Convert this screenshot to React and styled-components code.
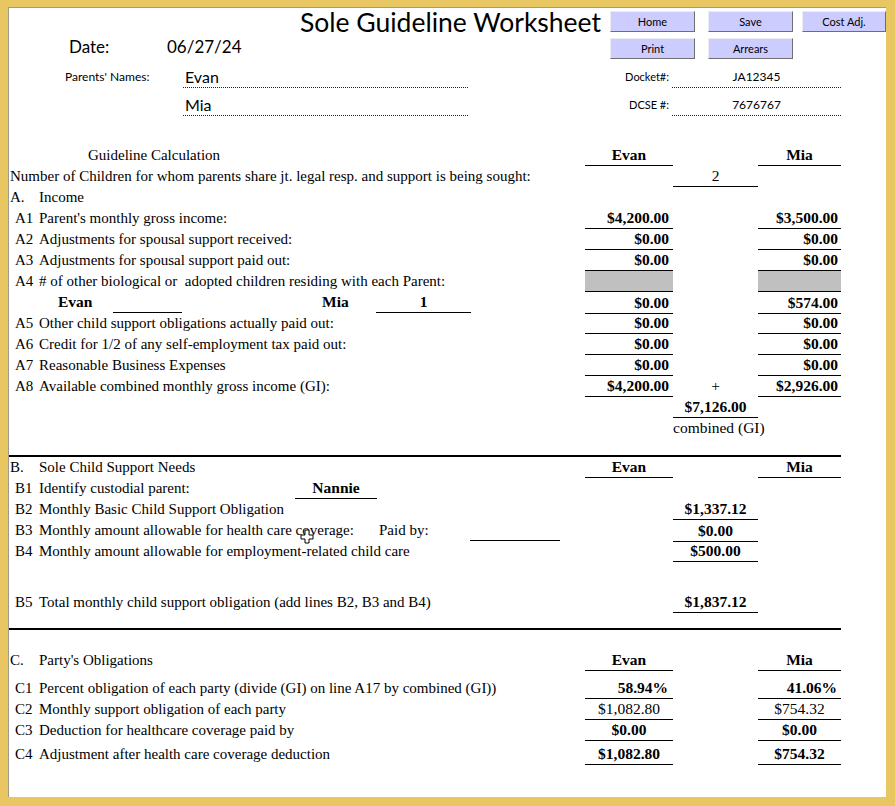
import React from 'react';
import styled, { createGlobalStyle } from 'styled-components';

const GlobalStyle = createGlobalStyle`
  html, body { margin: 0; padding: 0; }
  body {
    background: #e8c662;
    width: 895px;
    height: 806px;
    overflow: hidden;
  }
`;

const Sheet = styled.div`
  position: relative;
  box-sizing: border-box;
  margin: 7px 0 0 8px;
  width: 878px;
  height: 790px;
  background: #fff;
  border-top: 1px solid #a09a88;
  border-left: 1px solid #a09a88;
  color: #000;
`;

const TopBlock = styled.div`
  display: flex;
  height: 52px;
`;

const LeftBlock = styled.div`
  width: 601px;
`;

const Title = styled.div`
  padding-left: 291px;
  height: 29px;
  font: 26.5px/29px Lato, "Liberation Sans", sans-serif;
  white-space: nowrap;
`;

const DateRow = styled.div`
  display: flex;
  padding-left: 60px;
  font: 17px/20px Lato, "Liberation Sans", sans-serif;
`;

const DateLabel = styled.span`
  width: 98px;
`;

const ButtonGrid = styled.div`
  display: grid;
  grid-template-columns: 98px 94px 84px;
  grid-auto-rows: 21px;
  row-gap: 6px;
  padding-top: 3px;
`;

const Button = styled.button`
  box-sizing: border-box;
  width: ${p => p.w || 85}px;
  height: 21px;
  padding: 0;
  background: #ccccff;
  border: 1px solid;
  border-color: #ececf4 #6e6e6e #6e6e6e #ececf4;
  font: 11px/19px Lato, "Liberation Sans", sans-serif;
  color: #000;
  text-align: center;
  cursor: pointer;
`;

const NameGrid = styled.div`
  display: grid;
  grid-template-columns: 56px 118px 285px 201px 3px 169px;
  grid-auto-rows: 28px;
  align-items: end;
`;

const NameLabel = styled.div`
  font: ${p => (p.big ? '12px' : '11px')}/20px Lato, "Liberation Sans", sans-serif;
  text-align: ${p => (p.right ? 'right' : 'left')};
  border-bottom: 1px solid transparent;
`;

const Field = styled.div`
  border-bottom: 1px dotted #222;
  font: ${p => (p.small ? '12px' : '16px')}/20px Lato, "Liberation Sans", sans-serif;
  text-align: ${p => (p.center ? 'center' : 'left')};
  padding-left: ${p => (p.center ? 0 : 2)}px;
`;

const Table = styled.div`
  margin-top: 29px;
  font-family: "Liberation Serif", "Times New Roman", serif;
`;

const Row = styled.div`
  display: grid;
  grid-template-columns: 576px 88px 85px 83px;
  height: ${p => p.h || 21}px;
  align-items: end;
`;

const Label = styled.div`
  position: relative;
  display: flex;
  padding-left: ${p => p.pad ?? 1}px;
  font-size: 15px;
  line-height: 20px;
  white-space: pre;
  border-bottom: 1px solid transparent;
`;

const Code = styled.span`
  display: inline-block;
  width: ${p => p.w || 24}px;
`;

const Cell = styled.div`
  box-sizing: border-box;
  height: 21px;
  font-size: 15.5px;
  line-height: 20px;
  font-weight: ${p => (p.normal ? 'normal' : 'bold')};
  text-align: ${p => p.align || 'center'};
  padding-right: ${p => p.pr || 0}px;
  border-bottom: 1px solid ${p => (p.line ? '#000' : 'transparent')};
  background: ${p => (p.gray ? '#c0c0c0' : 'transparent')};
  white-space: nowrap;
`;

const Inline = styled.div`
  display: grid;
  grid-template-columns: ${p => p.cols};
  align-items: end;
`;

const Blank = styled.div`
  height: 20px;
  line-height: 20px;
  text-align: ${p => p.align || 'center'};
  padding-left: ${p => p.pl || 0}px;
  font-weight: ${p => (p.bold ? 'bold' : 'normal')};
  font-size: ${p => (p.bold ? 15.5 : 15)}px;
  border-bottom: 1px solid ${p => (p.line ? '#000' : 'transparent')};
  white-space: pre;
`;

const Rule = styled.div`
  width: 832px;
  height: 2px;
  background: #000;
  margin-top: ${p => p.mt}px;
  margin-bottom: ${p => p.mb || 0}px;
`;

const Spacer = styled.div`
  height: ${p => p.h}px;
`;

const CursorMark = styled.svg`
  position: absolute;
  left: 291px;
  top: 9px;
`;

const Money = ({ a, b, mid, gray, pr = 4 }) => (
  <>
    <Cell align="right" pr={pr} line gray={gray}>{a}</Cell>
    <Cell>{mid}</Cell>
    <Cell align="right" pr={3} line gray={gray}>{b}</Cell>
  </>
);

const Line = ({ code, text, a, b, mid, midLine }) => (
  <Row>
    <Label pad={6}><Code>{code}</Code>{text}</Label>
    {a !== undefined ? (
      <Money a={a} b={b} />
    ) : (
      <>
        <Cell />
        <Cell line={midLine}>{mid}</Cell>
        <Cell />
      </>
    )}
  </Row>
);

const Heads = () => (
  <>
    <Cell line>Evan</Cell>
    <Cell />
    <Cell line>Mia</Cell>
  </>
);

export default function App() {
  return (
    <>
      <GlobalStyle />
      <Sheet>
        <TopBlock>
          <LeftBlock>
            <Title>Sole Guideline Worksheet</Title>
            <DateRow>
              <DateLabel>Date:</DateLabel>
              <span>06/27/24</span>
            </DateRow>
          </LeftBlock>
          <ButtonGrid>
            <Button>Home</Button>
            <Button>Save</Button>
            <Button w={84}>Cost Adj.</Button>
            <Button>Print</Button>
            <Button>Arrears</Button>
          </ButtonGrid>
        </TopBlock>

        <NameGrid>
          <span />
          <NameLabel big>Parents' Names:</NameLabel>
          <Field>Evan</Field>
          <NameLabel right>Docket#:</NameLabel>
          <span />
          <Field small center>JA12345</Field>
          <span />
          <span />
          <Field>Mia</Field>
          <NameLabel right>DCSE #:</NameLabel>
          <span />
          <Field small center>7676767</Field>
        </NameGrid>

        <Table>
          <Row>
            <Label pad={79}>Guideline Calculation</Label>
            <Heads />
          </Row>
          <Row>
            <Label>Number of Children for whom parents share jt. legal resp. and support is being sought:</Label>
            <Cell />
            <Cell normal line>2</Cell>
            <Cell />
          </Row>
          <Row>
            <Label><Code w={29}>A.</Code>Income</Label>
          </Row>
          <Line code="A1" text="Parent's monthly gross income:" a="$4,200.00" b="$3,500.00" />
          <Line code="A2" text="Adjustments for spousal support received:" a="$0.00" b="$0.00" />
          <Line code="A3" text="Adjustments for spousal support paid out:" a="$0.00" b="$0.00" />
          <Row>
            <Label pad={6}><Code>A4</Code># of other biological or  adopted children residing with each Parent:</Label>
            <Money gray />
          </Row>
          <Row>
            <Label pad={0}>
              <Inline cols="49px 55px 69px 140px 54px 95px">
                <span />
                <Blank bold align="left">Evan</Blank>
                <Blank line />
                <span />
                <Blank bold align="left">Mia</Blank>
                <Blank bold line>1</Blank>
              </Inline>
            </Label>
            <Money a="$0.00" b="$574.00" />
          </Row>
          <Line code="A5" text="Other child support obligations actually paid out:" a="$0.00" b="$0.00" />
          <Line code="A6" text="Credit for 1/2 of any self-employment tax paid out:" a="$0.00" b="$0.00" />
          <Line code="A7" text="Reasonable Business Expenses" a="$0.00" b="$0.00" />
          <Row>
            <Label pad={6}><Code>A8</Code>Available combined monthly gross income (GI):</Label>
            <Cell align="right" pr={4} line>$4,200.00</Cell>
            <Cell normal>+</Cell>
            <Cell align="right" pr={3} line>$2,926.00</Cell>
          </Row>
          <Row>
            <Label />
            <Cell />
            <Cell line>$7,126.00</Cell>
            <Cell />
          </Row>
          <Row>
            <Label />
            <Cell />
            <Cell normal>combined (GI)</Cell>
            <Cell />
          </Row>

          <Rule mt={16} />

          <Row>
            <Label><Code w={29}>B.</Code>Sole Child Support Needs</Label>
            <Heads />
          </Row>
          <Row>
            <Label pad={0}>
              <Inline cols="286px 82px">
                <Blank align="left" pl={6}><Code>B1</Code>Identify custodial parent:</Blank>
                <Blank bold line>Nannie</Blank>
              </Inline>
            </Label>
          </Row>
          <Line code="B2" text="Monthly Basic Child Support Obligation" mid="$1,337.12" midLine />
          <Row>
            <Label pad={0}>
              <Inline cols="370px 91px 90px">
                <Blank align="left" pl={6}><Code>B3</Code>Monthly amount allowable for health care coverage:</Blank>
                <Blank align="left">Paid by:</Blank>
                <Blank line />
              </Inline>
              <CursorMark width="14" height="15" viewBox="0 0 14 15">
                <path d="M5 1h4v5h4v4H9v4H5v-4H1V6h4z" fill="#fff" stroke="#000" strokeWidth="1" />
              </CursorMark>
            </Label>
            <Cell />
            <Cell line>$0.00</Cell>
            <Cell />
          </Row>
          <Line code="B4" text="Monthly amount allowable for employment-related child care" mid="$500.00" midLine />
          <Spacer h={30} />
          <Line code="B5" text="Total monthly child support obligation (add lines B2, B3 and B4)" mid="$1,837.12" midLine />

          <Rule mt={15} mb={20} />

          <Row>
            <Label><Code w={29}>C.</Code>Party's Obligations</Label>
            <Heads />
          </Row>
          <Row h={28}>
            <Label pad={6}><Code>C1</Code>Percent obligation of each party (divide (GI) on line A17 by combined (GI))</Label>
            <Cell align="right" pr={5} line>58.94%</Cell>
            <Cell />
            <Cell align="right" pr={4} line>41.06%</Cell>
          </Row>
          <Row h={20}>
            <Label pad={6}><Code>C2</Code>Monthly support obligation of each party</Label>
            <Cell normal line>$1,082.80</Cell>
            <Cell />
            <Cell normal line>$754.32</Cell>
          </Row>
          <Row h={22}>
            <Label pad={6}><Code>C3</Code>Deduction for healthcare coverage paid by</Label>
            <Cell line>$0.00</Cell>
            <Cell />
            <Cell line>$0.00</Cell>
          </Row>
          <Row h={24}>
            <Label pad={6}><Code>C4</Code>Adjustment after health care coverage deduction</Label>
            <Cell line>$1,082.80</Cell>
            <Cell />
            <Cell line>$754.32</Cell>
          </Row>
        </Table>
      </Sheet>
    </>
  );
}
